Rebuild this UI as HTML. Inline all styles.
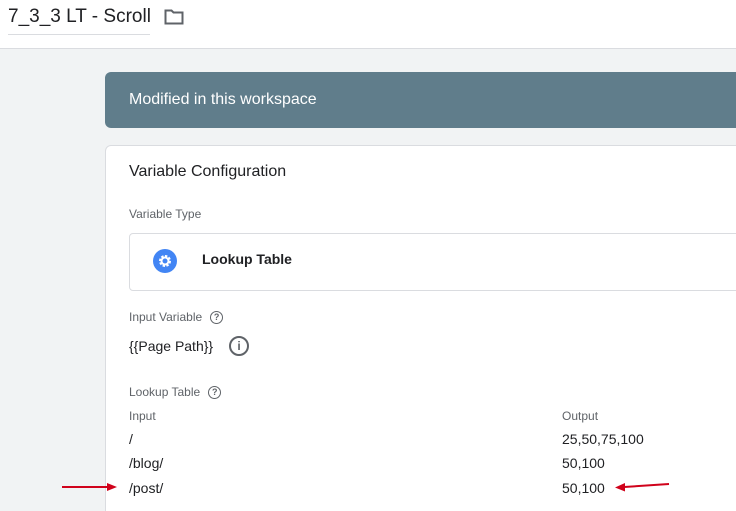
<!DOCTYPE html><html style="overflow:hidden;height:511px"><head><style>
body{margin:0;width:736px;height:511px;overflow:hidden;background:#f1f3f4;font-family:"Liberation Sans",sans-serif;position:relative}
.hdr{position:absolute;left:0;top:0;width:736px;height:48px;background:#fff;border-bottom:1px solid #dadce0}
.t{position:absolute;left:8px;top:6px;font-size:19px;color:#202124;padding-bottom:6px;border-bottom:1px solid #dadce0;width:142px;white-space:nowrap}
.ban{position:absolute;left:105px;top:72px;width:660px;height:56px;background:#607d8b;border-radius:6px;color:#fff;font-size:16px}
.ban span{position:absolute;left:24px;top:19px}
.card{position:absolute;left:105px;top:145px;width:660px;height:370px;background:#fff;border:1px solid #dadce0;border-bottom:none;border-radius:6px 6px 0 0}
.a{position:absolute;white-space:nowrap}
.lbl{font-size:12px;color:#5f6368}
.v{font-size:14px;color:#202124}
.box{position:absolute;left:23px;top:87px;width:640px;height:56px;border:1px solid #dadce0;border-radius:4px}
.q{display:inline-block;width:11px;height:11px;border:1.3px solid #5f6368;border-radius:50%;font-size:9px;line-height:11px;text-align:center;color:#5f6368;font-weight:bold;vertical-align:middle;margin-left:8px}
</style></head><body>
<div class="hdr"><div class="t">7_3_3 LT - Scroll</div>
<svg style="position:absolute;left:164px;top:9px" width="20" height="16" viewBox="0 0 20 16"><path d="M1.5 1.5h6l2 2h9v11h-17z" fill="none" stroke="#5f6368" stroke-width="2"/></svg></div>
<div class="ban"><span>Modified in this workspace</span></div>
<div class="card">
<div class="a" style="left:23px;top:17px;font-size:16px;color:#202124">Variable Configuration</div>
<div class="a lbl" style="left:23px;top:61px">Variable Type</div>
<div class="box">
<svg style="position:absolute;left:23px;top:15px" width="24" height="24" viewBox="0 0 24 24"><circle cx="12" cy="12" r="12" fill="#4285f4"/><circle cx="12" cy="12" r="4.5" fill="none" stroke="#fff" stroke-width="3" stroke-dasharray="2.2 1.3"/><circle cx="12" cy="12" r="3.5" fill="none" stroke="#fff" stroke-width="2"/></svg>
<div class="a" style="left:72px;top:17px;font-size:14px;font-weight:bold;color:#202124">Lookup Table</div></div>
<div class="a lbl" style="left:23px;top:164px">Input Variable<span class="q">?</span></div>
<div class="a v" style="left:23px;top:192px">{{Page Path}}</div>
<div class="a" style="left:123px;top:190px;width:16px;height:16px;border:2px solid #5f6368;border-radius:50%;text-align:center;font-size:12px;line-height:16px;color:#5f6368;font-weight:bold">i</div>
<div class="a lbl" style="left:23px;top:239px">Lookup Table<span class="q">?</span></div>
<div class="a lbl" style="left:23px;top:263px">Input</div>
<div class="a lbl" style="left:456px;top:263px">Output</div>
<div class="a v" style="left:23px;top:285px">/</div><div class="a v" style="left:456px;top:285px">25,50,75,100</div>
<div class="a v" style="left:23px;top:309px">/blog/</div><div class="a v" style="left:456px;top:309px">50,100</div>
<div class="a v" style="left:23px;top:334px">/post/</div><div class="a v" style="left:456px;top:334px">50,100</div>
</div>
<svg style="position:absolute;left:0;top:0" width="736" height="511"><g stroke="#d0021b" stroke-width="2" fill="#d0021b"><line x1="62" y1="487" x2="108" y2="487"/><path d="M117 487l-10-4v8z" stroke="none"/><line x1="669" y1="484" x2="624" y2="487"/><path d="M615 487.5l10-4.5v8.5z" stroke="none"/></g></svg>
</body></html>
